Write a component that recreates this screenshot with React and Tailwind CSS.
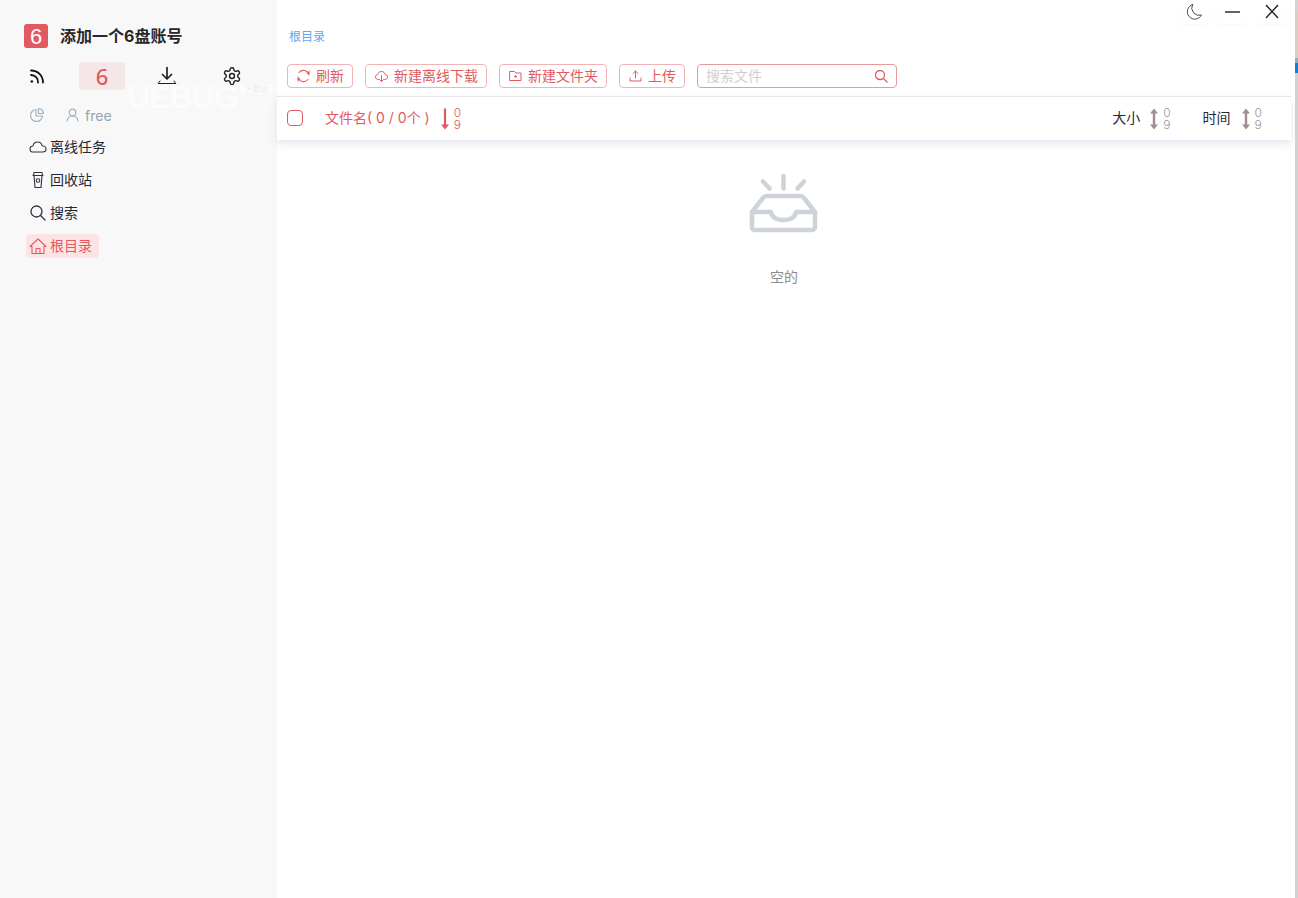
import React from "react";

const R = "#e15a60";

function SortIcon({ color, both, numColor }) {
  return (
    <span className="flex items-center">
      <svg width="12" height="24" viewBox="0 0 12 24" fill={color} stroke="none">
        {both && <path d="M6 1.5 L10 6.5 H7.2 V17.5 H10 L6 22.5 L2 17.5 H4.8 V6.5 H2 Z" />}
        {!both && <path d="M4.9 1.5 H7.1 V17.5 H10 L6 22.5 L2 17.5 H4.9 Z" />}
      </svg>
      <span className="ml-[3px] flex flex-col text-[12px] leading-[12px] font-light font-['Inter',sans-serif]" style={{ color: numColor }}>
        <span>0</span>
        <span>9</span>
      </span>
    </span>
  );
}

function Btn({ icon, label }) {
  return (
    <button className="h-6 flex items-center gap-[5px] px-2 rounded-[4px] border border-[#f1b3b5] text-[14px] text-[#e15a60] bg-white">
      {icon}
      <span className="pb-[2px]">{label}</span>
    </button>
  );
}

function NavItem({ icon, label, active }) {
  return (
    <div className={`h-6 flex items-center gap-[3px] pl-[3px] pr-[7px] w-fit rounded-[4px] text-[14px] ${active ? "bg-[#fce4e6] text-[#e15a60]" : "text-[#1f2937]"}`}>
      {icon}
      <span className="pb-[2px]">{label}</span>
    </div>
  );
}

function WinBtn({ children }) {
  return (
    <div className="w-[29px] h-6 rounded-[4px] bg-white shadow-[0_1px_3px_rgba(0,0,0,0.03)] flex items-center justify-center">
      {children}
    </div>
  );
}

const stroke = { fill: "none", strokeLinecap: "round", strokeLinejoin: "round" };

export default function App() {
  return (
    <div className="w-[1298px] h-[898px] flex overflow-hidden bg-white font-['Inter','Noto_Sans_CJK_SC',sans-serif]">
      <aside className="w-[277px] shrink-0 bg-[#f8f8f8] pt-6 relative">
        <div className="absolute left-[127px] top-[79px] flex items-end text-white opacity-70 select-none">
          <span className="text-[32px] leading-[36px] font-black tracking-[-1px] font-['Liberation_Sans',sans-serif]">UEBUG</span>
          <div className="flex flex-col items-end ml-[2px] pb-[3px]">
            <span className="w-[33px] h-[10px] rounded-[2px] bg-white text-[8px] leading-[10px] text-center text-[#e5e5e5]">下载站</span>
            <span className="mt-[4px] text-[15px] leading-[14px] font-['Liberation_Sans',sans-serif]">.com</span>
          </div>
        </div>

        <div className="flex items-center pl-6 h-6 gap-3 relative">
          <div className="w-6 h-6 rounded-[3px] bg-[#e15a60] text-white text-[22px] flex items-center justify-center font-['Liberation_Sans',sans-serif]">6</div>
          <div className="text-[16px] font-bold text-[#27272a]">添加一个6盘账号</div>
        </div>

        <div className="mt-[14px] h-7 flex items-center pl-[14px] relative">
          <div className="w-[46px] flex justify-center">
            <svg width="16" height="16" viewBox="0 0 16 16" {...stroke} stroke="#111" strokeWidth="1.8">
              <path d="M2 7 A7 7 0 0 1 9 14.5" />
              <path d="M2 2.5 A11.8 11.8 0 0 1 14 14.5" />
              <circle cx="2.8" cy="13.5" r="1.3" fill="#111" stroke="none" />
            </svg>
          </div>
          <div className="ml-[19px] w-[46px] h-7 rounded-[4px] bg-[#f5e7e7] flex items-center justify-center text-[22px] font-medium text-[#e15a60] font-['Noto_Sans',sans-serif]">6</div>
          <div className="ml-[19px] w-[46px] flex justify-center">
            <svg width="20" height="20" viewBox="0 0 20 20" {...stroke} stroke="#222" strokeWidth="1.3">
              <path d="M10 1.5 V12.5 M5.5 8.5 L10 13 L14.5 8.5" strokeWidth="1.7" />
              <path d="M1.5 17 L3 15 M18.5 17 L17 15 M1.5 17.5 H18.5" strokeWidth="1" />
            </svg>
          </div>
          <div className="ml-[19px] w-[46px] flex justify-center">
            <svg width="20" height="20" viewBox="0 0 24 24" {...stroke} stroke="#222" strokeWidth="1.7">
              <path d="M12.22 2h-.44a2 2 0 0 0-2 2v.18a2 2 0 0 1-1 1.73l-.43.25a2 2 0 0 1-2 0l-.15-.08a2 2 0 0 0-2.73.73l-.22.38a2 2 0 0 0 .73 2.73l.15.1a2 2 0 0 1 1 1.72v.51a2 2 0 0 1-1 1.74l-.15.09a2 2 0 0 0-.73 2.73l.22.38a2 2 0 0 0 2.73.73l.15-.08a2 2 0 0 1 2 0l.43.25a2 2 0 0 1 1 1.73V20a2 2 0 0 0 2 2h.44a2 2 0 0 0 2-2v-.18a2 2 0 0 1 1-1.73l.43-.25a2 2 0 0 1 2 0l.15.08a2 2 0 0 0 2.73-.73l.22-.39a2 2 0 0 0-.73-2.73l-.15-.08a2 2 0 0 1-1-1.74v-.5a2 2 0 0 1 1-1.74l.15-.09a2 2 0 0 0 .73-2.73l-.22-.38a2 2 0 0 0-2.73-.73l-.15.08a2 2 0 0 1-2 0l-.43-.25a2 2 0 0 1-1-1.73V4a2 2 0 0 0-2-2z" />
              <circle cx="12" cy="12" r="3" />
            </svg>
          </div>
        </div>

        <div className="mt-[15px] h-5 flex items-center pl-[29px] text-[14px] text-[#8fa5b5] relative">
          <svg width="16" height="16" viewBox="0 0 16 16" {...stroke} stroke="#9db3c4" strokeWidth="1.2">
            <path d="M7 2.5 A6 6 0 1 0 13.5 9 H7 Z" />
            <path d="M9.5 1.5 A5.5 5.5 0 0 1 14.5 6.5 H9.5 Z" />
          </svg>
          <svg className="ml-[21px]" width="13" height="14" viewBox="0 0 13 14" {...stroke} stroke="#9db3c4" strokeWidth="1.2">
            <circle cx="6.5" cy="4.5" r="3.3" />
            <path d="M1 13 C1.5 9.5 4 8 6.5 8 C9 8 11.5 9.5 12 13" />
          </svg>
          <span className="ml-[6px]">free</span>
        </div>

        <div className="mt-[10px] ml-[26px] flex flex-col gap-[9px]">
          <NavItem label="离线任务" icon={
            <svg width="18" height="16" viewBox="0 0 18 16" {...stroke} stroke="#2b3440" strokeWidth="1.1">
              <path d="M4.5 13 C2.3 13 1 11.6 1 9.9 C1 8.2 2.4 7 4 7 C4.4 4.5 6.3 3 8.6 3 C11 3 12.7 4.6 13.2 6.8 C15.3 7 17 8 17 10 C17 11.8 15.6 13 13.7 13 Z" />
            </svg>
          } />
          <NavItem label="回收站" icon={
            <svg width="18" height="18" viewBox="0 0 18 18" {...stroke} stroke="#2b3440" strokeWidth="1.1">
              <path d="M4 4.5 H14 M5 1.5 H13 L13.5 4.5 H4.5 Z M5 4.5 L6 16.5 H12 L13 4.5" />
              <circle cx="9" cy="9.5" r="1.8" />
            </svg>
          } />
          <NavItem label="搜索" icon={
            <svg width="18" height="18" viewBox="0 0 18 18" {...stroke} stroke="#2b3440" strokeWidth="1.3">
              <circle cx="7.5" cy="7.5" r="5.5" />
              <path d="M11.5 11.5 L16 16" />
            </svg>
          } />
          <NavItem active label="根目录" icon={
            <svg width="18" height="18" viewBox="0 0 18 18" {...stroke} stroke="#e15a60" strokeWidth="1.1">
              <path d="M1 9.5 L9 2 L17 9.5 H15 V16.5 H3 V9.5 Z" />
              <path d="M7 16.5 V11.5 H11 V16.5" />
            </svg>
          } />
        </div>
      </aside>

      <main className="flex-1 pr-[4px] flex flex-col relative">
        <div className="h-[64px] pl-3 pt-[28px] text-[12px] leading-[18px] text-[#5aa8f0]">根目录</div>
        <div className="absolute top-0 right-[9px] flex gap-[10px]">
          <WinBtn>
            <svg width="18" height="18" viewBox="0 0 18 18" {...stroke} stroke="#4b4b4b" strokeWidth="1" className="ml-[1px]">
              <path d="M7.5 1.5 A7.5 7.5 0 1 0 16.5 12 A7.5 7.5 0 0 1 7.5 1.5 Z" />
            </svg>
          </WinBtn>
          <WinBtn>
            <svg width="15" height="16" viewBox="0 0 15 16" stroke="#222" strokeWidth="1.4">
              <path d="M0 8 H15" />
            </svg>
          </WinBtn>
          <WinBtn>
            <svg width="14" height="15" viewBox="0 0 14 15" stroke="#222" strokeWidth="1.4" className="mb-[1px]">
              <path d="M1 1 L13 14 M13 1 L1 14" />
            </svg>
          </WinBtn>
        </div>

        <div className="flex items-center pl-[10px] h-[24px] gap-3">
          <Btn label="刷新" icon={
            <svg width="15" height="14" viewBox="0 0 14 14" {...stroke} stroke={R} strokeWidth="1.1">
              <path d="M12.5 6 A5.7 5.7 0 0 0 2.5 3.5 M1.5 8 A5.7 5.7 0 0 0 11.5 10.5 M10.5 4 L12.5 4.5 L12.5 2 M3.5 10 L1.5 9.5 L1.5 12" />
            </svg>
          } />
          <Btn label="新建离线下载" icon={
            <svg width="15" height="14" viewBox="0 0 14 14" {...stroke} stroke={R} strokeWidth="1">
              <path d="M4 10.5 C2 10.5 1 9.3 1 8 C1 6.6 2 5.7 3.2 5.6 C3.5 3.7 5 2.5 7 2.5 C9 2.5 10.4 3.8 10.8 5.5 C12.2 5.6 13 6.7 13 8 C13 9.4 12 10.5 10 10.5 M7 6.5 V12.5 M5 10.5 L7 12.5 L9 10.5" />
            </svg>
          } />
          <Btn label="新建文件夹" icon={
            <svg width="15" height="14" viewBox="0 0 14 14" {...stroke} stroke={R} strokeWidth="1">
              <path d="M1.5 2.5 H6 L7.5 4 H12.5 V11.5 H1.5 Z" />
              <circle cx="7" cy="7.5" r="0.8" fill={R} />
            </svg>
          } />
          <Btn label="上传" icon={
            <svg width="15" height="14" viewBox="0 0 14 14" {...stroke} stroke={R} strokeWidth="1">
              <path d="M7 9 V2 M4.5 4.5 L7 2 L9.5 4.5 M1.5 9 V12 H12.5 V9" />
            </svg>
          } />
          <div className="w-[200px] h-6 rounded-[4px] border border-[#e79a9c] flex items-center justify-between pl-2 pr-2 text-[14px] text-[#cfcfcf]">
            <span className="pb-[2px]">搜索文件</span>
            <svg width="14" height="14" viewBox="0 0 14 14" {...stroke} stroke={R} strokeWidth="1.3">
              <circle cx="6" cy="6" r="4.5" />
              <path d="M9.5 9.5 L13 13" />
            </svg>
          </div>
        </div>

        <div className="mt-2 h-[44px] border-t border-[#e5e5ea] flex items-center shadow-[0_4px_8px_rgba(200,205,220,0.45)] bg-white text-[14px] relative">
          <div className="ml-[10px] mb-px w-4 h-4 rounded-[4px] border border-[#e15a60] bg-white" />
          <div className="ml-[22px] pb-[2px] text-[#e15a60]">文件名( 0 / 0个 )</div>
          <div className="ml-[9px]"><SortIcon color="#e15a60" numColor="#e15a60" /></div>
          <div className="ml-auto pb-[2px] text-[#1f2d3d]">大小</div>
          <div className="ml-[8px]"><SortIcon both color="#a08e8e" numColor="#999" /></div>
          <div className="ml-[32px] pb-[2px] text-[#1f2d3d]">时间</div>
          <div className="ml-[9px] mr-[29px]"><SortIcon both color="#a08e8e" numColor="#999" /></div>
        </div>

        <div className="flex flex-col items-center mt-[33px]">
          <svg width="70" height="62" viewBox="0 0 70 62" {...stroke} stroke="#cdd3d9" strokeWidth="4.5">
            <path d="M34.5 3 V15.5" />
            <path d="M14 8.5 L20.5 15.5" />
            <path d="M55 8.5 L48.5 15.5" />
            <path d="M3 39 L14 25 Q15.5 23 18 23 H51 Q53.5 23 55 25 L66 39 V54 A3 3 0 0 1 63 57 H6 A3 3 0 0 1 3 54 Z" />
            <path d="M3 39 H22 C23 45 28 47 34.5 47 C41 47 46 45 47 39 H66" />
          </svg>
          <div className="mt-[31px] text-[14px] text-[#8c8c8c]">空的</div>
        </div>
      </main>

      <div className="w-[3px] shrink-0 flex flex-col">
        <div className="h-[12px] bg-[#d4d4d4]" />
        <div className="h-[46px] bg-[#d6cfc2]" />
        <div className="h-[5px] bg-[#8fb0c0]" />
        <div className="h-[10px] bg-[#0f7fd8]" />
        <div className="flex-1 bg-[#d2d2d2]" />
      </div>
    </div>
  );
}
